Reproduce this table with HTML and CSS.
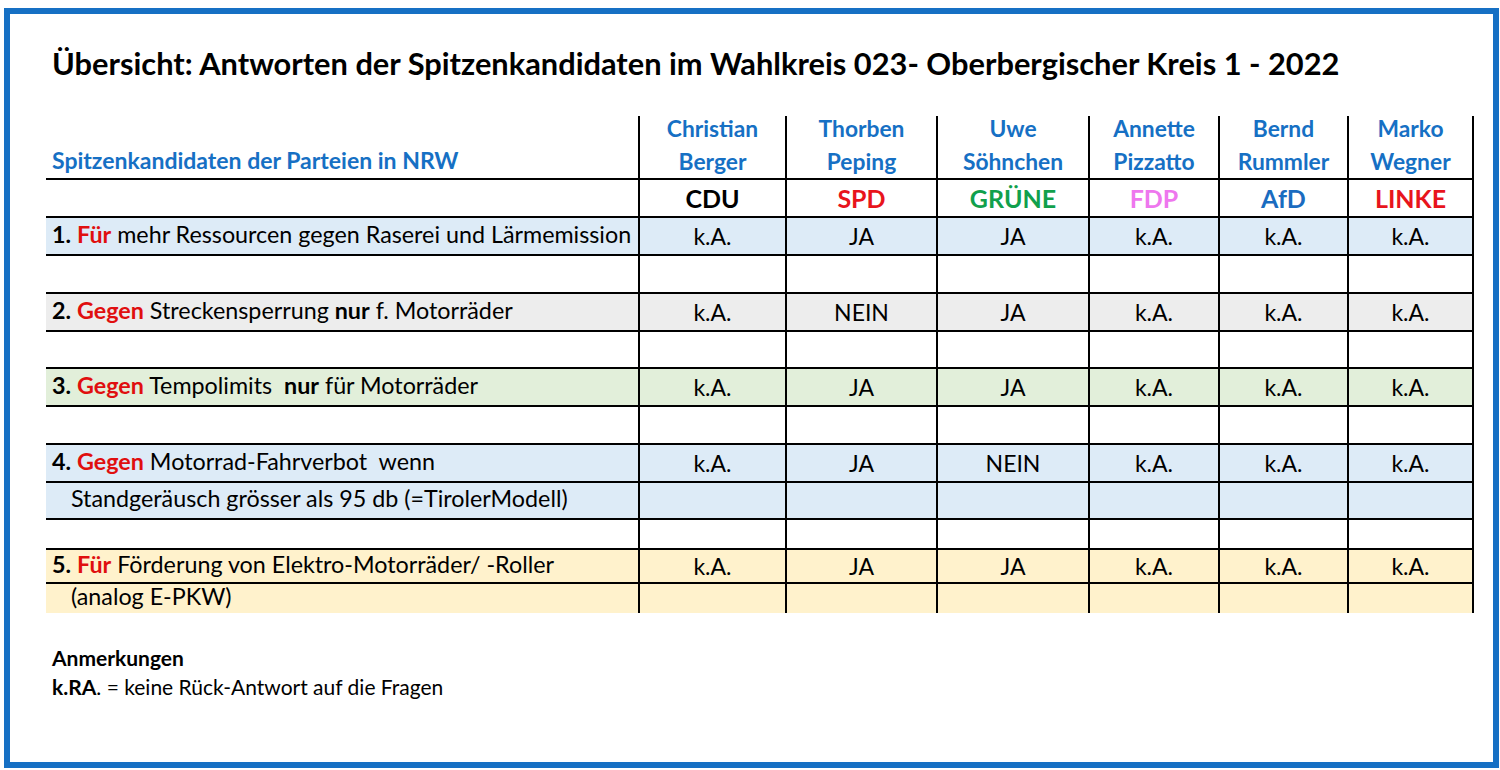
FILE: index.html
```html
<!DOCTYPE html>
<html lang="de">
<head>
<meta charset="utf-8">
<title>Übersicht Wahlkreis 023</title>
<link rel="stylesheet" href="styles.css">
</head>
<body>
<div class="frame">
  <h1 class="title">Übersicht: Antworten der Spitzenkandidaten im Wahlkreis 023- Oberbergischer Kreis 1 - 2022</h1>
  <div class="grid">
    <div class="c q head-left top"><span>Spitzenkandidaten der Parteien in NRW</span></div>
    <div class="c v top name"><span>Christian<br>Berger</span></div>
    <div class="c v top name"><span>Thorben<br>Peping</span></div>
    <div class="c v top name"><span>Uwe<br>Söhnchen</span></div>
    <div class="c v top name"><span>Annette<br>Pizzatto</span></div>
    <div class="c v top name"><span>Bernd<br>Rummler</span></div>
    <div class="c v r top name"><span>Marko<br>Wegner</span></div>

    <div class="c q h38"></div>
    <div class="c v h38 party cdu">CDU</div>
    <div class="c v h38 party spd">SPD</div>
    <div class="c v h38 party gruene">GRÜNE</div>
    <div class="c v h38 party fdp">FDP</div>
    <div class="c v h38 party afd">AfD</div>
    <div class="c v r h38 party linke">LINKE</div>

    <div class="c q h38 blue"><span><b>1.</b> <b class="red">Für</b> mehr Ressourcen gegen Raserei und Lärmemission</span></div>
    <div class="c v h38 blue">k.A.</div>
    <div class="c v h38 blue">JA</div>
    <div class="c v h38 blue">JA</div>
    <div class="c v h38 blue">k.A.</div>
    <div class="c v h38 blue">k.A.</div>
    <div class="c v r h38 blue">k.A.</div>

    <div class="c q h38"></div>
    <div class="c v h38"></div><div class="c v h38"></div><div class="c v h38"></div>
    <div class="c v h38"></div><div class="c v h38"></div><div class="c v r h38"></div>

    <div class="c q h38 grey"><span><b>2.</b> <b class="red">Gegen</b> Streckensperrung <b>nur</b> f. Motorräder</span></div>
    <div class="c v h38 grey">k.A.</div>
    <div class="c v h38 grey">NEIN</div>
    <div class="c v h38 grey">JA</div>
    <div class="c v h38 grey">k.A.</div>
    <div class="c v h38 grey">k.A.</div>
    <div class="c v r h38 grey">k.A.</div>

    <div class="c q h37"></div>
    <div class="c v h37"></div><div class="c v h37"></div><div class="c v h37"></div>
    <div class="c v h37"></div><div class="c v h37"></div><div class="c v r h37"></div>

    <div class="c q h38 green"><span><b>3.</b> <b class="red">Gegen</b> Tempolimits&nbsp; <b>nur</b> für Motorräder</span></div>
    <div class="c v h38 green">k.A.</div>
    <div class="c v h38 green">JA</div>
    <div class="c v h38 green">JA</div>
    <div class="c v h38 green">k.A.</div>
    <div class="c v h38 green">k.A.</div>
    <div class="c v r h38 green">k.A.</div>

    <div class="c q h38"></div>
    <div class="c v h38"></div><div class="c v h38"></div><div class="c v h38"></div>
    <div class="c v h38"></div><div class="c v h38"></div><div class="c v r h38"></div>

    <div class="c q h38 blue"><span><b>4.</b> <b class="red">Gegen</b> Motorrad-Fahrverbot&nbsp; wenn</span></div>
    <div class="c v h38 blue">k.A.</div>
    <div class="c v h38 blue">JA</div>
    <div class="c v h38 blue">NEIN</div>
    <div class="c v h38 blue">k.A.</div>
    <div class="c v h38 blue">k.A.</div>
    <div class="c v r h38 blue">k.A.</div>

    <div class="c q h37 blue indent"><span>Standgeräusch grösser als 95 db (=TirolerModell)</span></div>
    <div class="c v h37 blue"></div><div class="c v h37 blue"></div><div class="c v h37 blue"></div>
    <div class="c v h37 blue"></div><div class="c v h37 blue"></div><div class="c v r h37 blue"></div>

    <div class="c q h30"></div>
    <div class="c v h30"></div><div class="c v h30"></div><div class="c v h30"></div>
    <div class="c v h30"></div><div class="c v h30"></div><div class="c v r h30"></div>

    <div class="c q h34 yellow"><span><b>5.</b> <b class="red">Für</b> Förderung von Elektro-Motorräder/ -Roller</span></div>
    <div class="c v h34 yellow">k.A.</div>
    <div class="c v h34 yellow">JA</div>
    <div class="c v h34 yellow">JA</div>
    <div class="c v h34 yellow">k.A.</div>
    <div class="c v h34 yellow">k.A.</div>
    <div class="c v r h34 yellow">k.A.</div>

    <div class="c q h31 yellow indent"><span>(analog E-PKW)</span></div>
    <div class="c v h31 yellow"></div><div class="c v h31 yellow"></div><div class="c v h31 yellow"></div>
    <div class="c v h31 yellow"></div><div class="c v h31 yellow"></div><div class="c v r h31 yellow"></div>
  </div>

  <div class="notes">
    <div class="notes-title">Anmerkungen</div>
    <div><b>k.RA</b>. = keine Rück-Antwort auf die Fragen</div>
  </div>
</div>
</body>
</html>
```

FILE: styles.css
```css
html, body {
  margin: 0;
  padding: 0;
  background: #ffffff;
}

body {
  font-family: "Lato", "Liberation Sans", sans-serif;
  color: #000000;
}

.frame {
  box-sizing: border-box;
  margin: 8px 0 0 4px;
  width: 1495px;
  height: 760px;
  border: 6px solid #1670c4;
  padding: 0 0 0 36px;
}

.title {
  margin: 31px 0 0 6px;
  font-size: 30.8px;
  line-height: 38px;
  font-weight: 700;
  white-space: nowrap;
}

.grid {
  margin-top: 33px;
  display: grid;
  grid-template-columns: 592px 147px 151px 152px 130px 129px 127px;
  font-size: 23px;
}

.c {
  box-sizing: border-box;
  border-top: 2px solid #000;
  display: flex;
  align-items: center;
}

.v {
  border-left: 2px solid #000;
  justify-content: center;
}

.r {
  border-right: 2px solid #000;
}

.q {
  padding-left: 6px;
  padding-bottom: 5px;
  font-size: 23.3px;
  white-space: nowrap;
}

.indent {
  padding-left: 25px;
}

.top {
  height: 62px;
  border-top: none;
}

.h38 { height: 38px; }
.h37 { height: 37px; }
.h34 { height: 34px; }
.h31 { height: 31px; }
.h30 { height: 30px; }

.head-left {
  align-items: flex-end;
  padding-bottom: 3px;
  line-height: 30px;
  font-size: 23px;
  color: #1670c4;
  font-weight: 700;
}

.name {
  align-items: flex-end;
  color: #1670c4;
  font-weight: 700;
  text-align: center;
  line-height: 33px;
  font-size: 22.8px;
}

.party {
  font-weight: 700;
  font-size: 25px;
}

.cdu { color: #000000; }
.spd { color: #e8141c; }
.gruene { color: #11a04c; }
.fdp { color: #ee77ee; }
.afd { color: #1a6cc0; }
.linke { color: #e8141c; }

.red { color: #e00f0f; }

.blue { background: #ddebf7; }
.grey { background: #ededed; }
.green { background: #e2efda; }
.yellow { background: #fff2cc; }

.notes {
  margin: 30px 0 0 6px;
  font-size: 21px;
  line-height: 29px;
}

.notes-title {
  font-weight: 700;
}
```
